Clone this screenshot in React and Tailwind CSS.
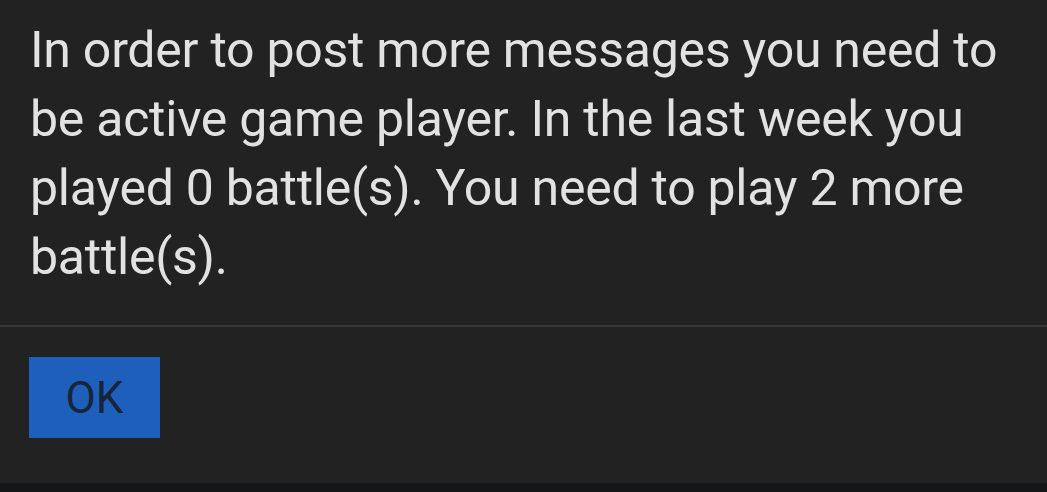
export default function App() {
    return (
        <div className="w-full h-[492px] bg-[#222222] flex flex-col overflow-hidden" style={{ fontFamily: 'Roboto, "Liberation Sans", sans-serif' }}>
            <p className="pt-[16px] pl-[30px] pr-[30px] text-[50px] tracking-[-0.25px] leading-[69px] text-[#e2e2e2]">
                In order to post more messages you need to be active game player. In the last week you played 0 battle(s). You need to play 2 more battle(s).
            </p>
            <div className="mt-[33px] h-[2px] bg-[#363636]" />
            <div className="pt-[30px] pl-[29px]">
                <button className="w-[131px] h-[81px] bg-[#1f5fbc] text-[#18243a] text-[44px] flex items-center justify-center">
                    OK
                </button>
            </div>
            <div className="flex-1" />
            <div className="h-[9px] bg-[#151618]" />
        </div>
    )
}
